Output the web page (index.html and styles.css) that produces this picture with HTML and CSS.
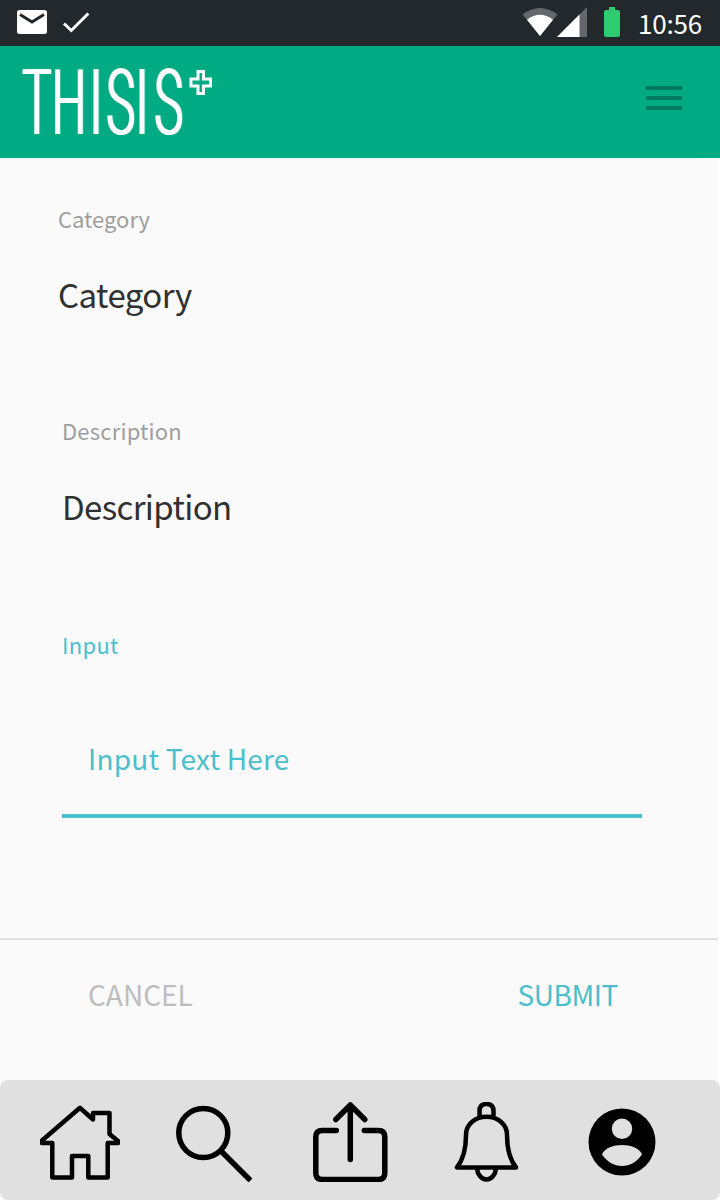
FILE: index.html
```html
<!DOCTYPE html>
<html lang="en">
<head>
<meta charset="utf-8">
<title>THISIS+</title>
<link rel="stylesheet" href="styles.css">
</head>
<body>
<div class="screen">
  <header class="status">
    <svg class="status-left" width="80" height="46" viewBox="12 0 80 46">
      <rect x="17" y="10" width="30" height="24" rx="2.5" fill="#fff"/>
      <path d="M20 14.500l12 7.500 12-7.500" fill="none" stroke="#23282d" stroke-width="3"/>
      <path d="M64 23.500l7.300 7L88.300 13.500" fill="none" stroke="#fff" stroke-width="3"/>
    </svg>
    <svg class="status-right" width="100" height="46" viewBox="522 0 100 46">
      <path d="M522.500 14.500Q540 1.500 557.500 14.500L540 36z" fill="#64686c"/>
      <path d="M527 19.700Q540 10 553 19.700L540 36z" fill="#fff"/>
      <path d="M587 7v30h-30z" fill="#64686c"/>
      <path d="M579.500 14.500V37H557z" fill="#fff"/>
      <path d="M609 7h6v3h3q2 0 2 2v23q0 2-2 2h-12q-2 0-2-2V12q0-2 2-2h3z" fill="#2ecc71"/>
    </svg>
    <time class="clock">10:56</time>
  </header>

  <div class="topbar">
    <svg class="logo" width="200" height="112" viewBox="20 46 200 112">
      <text class="wordmark" transform="translate(0 134) scale(.54 1)" x="39.500 94 164 195 249 284">THISIS</text>
      <path d="M198 71.500h5.500v7.500h7v7h-7v7.500H198V86h-7v-7h7z" fill="none" stroke="#fff" stroke-width="3"/>
    </svg>
    <button class="menu" aria-label="Menu"><span></span><span></span><span></span></button>
  </div>

  <main class="form">
    <section class="field field-category">
      <div class="label">Category</div>
      <div class="value">Category</div>
    </section>
    <section class="field field-description">
      <div class="label">Description</div>
      <div class="value">Description</div>
    </section>
    <section class="field field-input">
      <div class="label">Input</div>
      <div class="entry">Input Text Here</div>
    </section>
  </main>

  <div class="actions">
    <button class="action cancel">CANCEL</button>
    <button class="action submit">SUBMIT</button>
  </div>

  <nav class="tabs">
    <svg width="80" height="80" viewBox="40 1102 80 80">
      <path d="M80 1107.800L42 1140.500V1143H52.300V1177.500H72V1156H88.300V1177.500H107.700V1143H118V1141L109.500 1134V1113H93V1119.500z" fill="none" stroke="#000" stroke-width="4.500" stroke-linejoin="round"/>
    </svg>
    <svg width="80" height="80" viewBox="176 1102 80 80">
      <g fill="none" stroke="#000" stroke-width="5.500"><circle cx="203.300" cy="1133" r="24.500"/><path d="M221 1151l29.500 29.500"/></g>
    </svg>
    <svg width="80" height="80" viewBox="310.700 1102 80 80">
      <path d="M336 1130.500H322q-6.500 0-6.500 6.500v36q0 6.500 6.500 6.500h56q6.500 0 6.500-6.500v-36q0-6.500-6.500-6.500H364M350 1105v54.500M335.500 1119.500L350 1105l14.500 14.500" fill="none" stroke="#000" stroke-width="5.500" stroke-linecap="round" stroke-linejoin="round"/>
    </svg>
    <svg width="80" height="80" viewBox="446.500 1102 80 80">
      <path d="M456.500 1167.500H515.500Q506.500 1156 506.500 1135C506.500 1124 497 1116.800 486 1116.800S465.500 1124 465.500 1135Q465.500 1156 456.500 1167.500zM479 1117v-6q0-7 7-7t7 7v6M476.500 1168.500c.5 6 4.500 11 9.500 11s9-5 9.500-11" fill="none" stroke="#000" stroke-width="4.500" stroke-linejoin="round"/>
    </svg>
    <svg width="80" height="80" viewBox="582 1102 80 80">
      <circle cx="622" cy="1142" r="33.500"/>
      <circle cx="622" cy="1128.800" r="10.200" fill="#e0e0e0"/>
      <path d="M602 1154.200c2.800-6.200 11.500-9.200 20-9.200s17.200 3 20 9.200C637.200 1161.800 630 1166 622 1166s-15.200-4.200-20-11.800z" fill="#e0e0e0"/>
    </svg>
  </nav>
</div>
</body>
</html>
```

FILE: styles.css
```css
* { box-sizing: border-box; }

body {
  margin: 0;
  background: #fff;
  font-family: "Noto Sans CJK SC", "Noto Sans", sans-serif;
}

button {
  padding: 0;
  border: 0;
  background: none;
  font: inherit;
}

svg { display: block; }

.screen {
  display: flex;
  flex-direction: column;
  width: 720px;
  height: 1200px;
  overflow: hidden;
}

.status {
  display: flex;
  height: 46px;
  padding: 0 17px 0 12px;
  background: #23282d;
  color: #fff;
}

.status-right { margin-left: auto; }

.clock {
  width: 69px;
  margin-left: 12px;
  padding-left: 4px;
  font-size: 26px;
  line-height: 46px;
  letter-spacing: -.2px;
  white-space: nowrap;
}

.topbar {
  display: flex;
  justify-content: space-between;
  height: 112px;
  padding: 0 38px 0 20px;
  background: #00ab84;
}

.wordmark {
  font-family: Roboto, sans-serif;
  font-size: 90px;
  font-weight: 300;
  fill: #fff;
  filter: drop-shadow(4.4px 0 0 #fff);
}

.menu {
  display: flex;
  flex-direction: column;
  gap: 6px;
  width: 36px;
  height: 24px;
  margin-top: 40px;
}

.menu span {
  height: 4px;
  background: #007a60;
}

.form {
  width: 718px;
  height: 782px;
  padding: 42px 76px 0 62px;
  border-bottom: 2px solid #e0e0e0;
  background: #fafafa;
}

.field { height: 212px; }
.field-category { margin-left: -4px; }
.field-input { margin-top: 2px; color: #4bbfcb; }

.label {
  color: #9e9e9e;
  font-size: 22px;
  line-height: 36px;
}

.field-description .label { letter-spacing: .2px; }
.field-input .label { color: inherit; letter-spacing: .3px; }

.value {
  margin-top: 34px;
  color: #303030;
  font-size: 33px;
  line-height: 48px;
  letter-spacing: -.55px;
}

.field-description .value { letter-spacing: -.65px; }

.entry {
  height: 116px;
  margin-top: 40px;
  padding: 36px 26px 0;
  border-bottom: 4px solid #4bbfcb;
  font-size: 28px;
  line-height: 40px;
  letter-spacing: .2px;
}

.actions {
  display: flex;
  justify-content: space-between;
  width: 718px;
  height: 140px;
  padding: 34px 100px 0 88px;
  background: #fafafa;
}

.action {
  height: 40px;
  font-size: 28px;
  line-height: 40px;
}

.cancel { color: #bdbdbd; }
.submit { color: #4bbfcb; letter-spacing: -.4px; }

.tabs {
  display: flex;
  justify-content: space-between;
  height: 120px;
  padding: 22px 58px 0 40px;
  border-radius: 8px;
  background: #e0e0e0;
}
```
